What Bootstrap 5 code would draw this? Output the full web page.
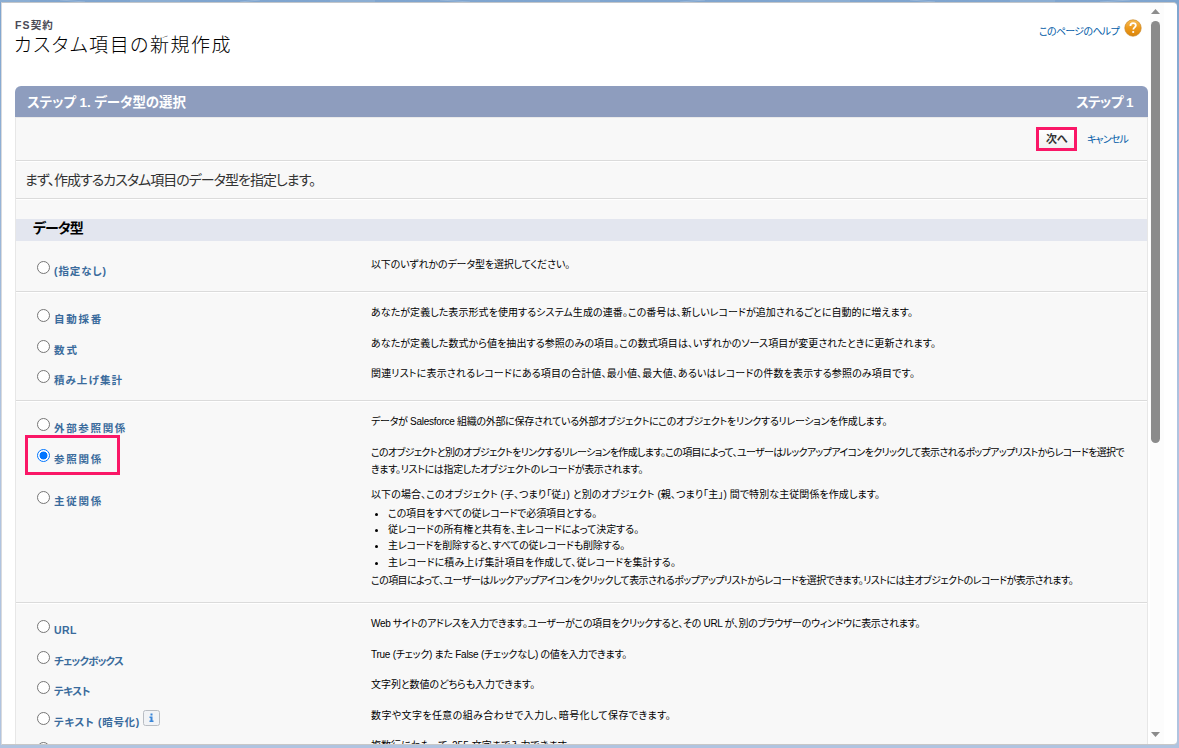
<!DOCTYPE html>
<html lang="ja">
<head>
<meta charset="utf-8">
<title>カスタム項目の新規作成</title>
<link rel="stylesheet" href="https://cdn.jsdelivr.net/npm/bootstrap@5.3.0/dist/css/bootstrap.min.css">
<style>
html, body { height: 748px; overflow: hidden; }
body { font: 11px/17px "Liberation Sans", "Noto Sans CJK JP", sans-serif; color: #000; background: linear-gradient(#7fa5cf, #b0c4e0 420px); }
.strip { height: 2px; overflow: hidden; }
.strip svg { display: block; }
.frame { height: 743px; margin: 0 2px 0 1px; border: 1px solid #d9dadd; border-top-color: #c3c6ca; border-bottom: 1px solid #c8c8c8; border-right: 0; border-radius: 0 4px 4px 0; background: #fff; overflow: hidden; }
.content-col { width: 1133px; margin-left: 13px; }
[data-w] { display: inline-block; white-space: nowrap; font-feature-settings: "palt"; }
.masthead { height: 83px; }
.object-name { font-size: 10.5px; line-height: 14px; color: #4a4a56; margin-top: 15px; }
.page-title { font-family: "Noto Sans CJK JP", sans-serif; font-size: 19px; line-height: 24px; font-weight: 300; margin: 0 0 0 -1px; }
a { color: #015ba7; text-decoration: none; }
.help { padding: 16px 6px 0 0; font-size: 10px; }
.wizard-head { height: 31px; padding: 1px 15px 0 12px; background: #8e9dbe; border-radius: 6px 6px 0 0; color: #fff; font-size: 13.5px; }
.wizard-body { height: 700px; background: #f8f8f8; border: solid #e7e7e7; border-width: 0 1px; }
.ruled { border-bottom: 1px solid #dbdbdb; box-shadow: 0 1px #fff; }
.actions { height: 44px; padding-right: 19px; border-top: 1px solid #eaeaea; font-size: 10px; }
.intro { height: 38px; padding: 2px 0 0 9px; font-size: 14px; color: #333; }
.band { height: 22px; margin-top: 20px; padding-left: 17px; background: #e3e6ef; font-size: 14px; line-height: 18px; }
.btn-next { width: 41px; height: 24px; border: 3px solid #fa1767; border-radius: 0; padding: 0; font-size: 11px; line-height: 16px; color: #333; background: linear-gradient(#fff, #f1f1f1); margin-right: 10px; }
.type-group { padding: 12px 0 0 21px; }
.type-group.first { padding-top: 15px; }
.type-row { display: flex; position: relative; height: 30.5px; }
.type-row.tall { height: 42px; }
.type-row input { appearance: none; width: 13px; height: 13px; margin: 5px 4px 0 0; border: 1px solid #767676; border-radius: 50%; background: #fff; flex: none; }
.type-row input:checked { border-color: #0075ff; background: radial-gradient(circle, #0075ff 3.6px, #fff 4.3px); }
.type-label { width: 317px; height: 24px; flex: none; padding-top: 7px; color: #3a6b9c; font-weight: 700; font-size: 10.5px; }
.type-desc { flex: none; width: 772px; font-size: 10px; }
.type-desc ul { margin: 2px 0 2px; padding-left: 17px; line-height: 16.4px; }
.type-desc li { height: 16.4px; }
.type-desc li::marker { font-size: 11px; }
.highlight { position: absolute; left: -12px; top: -9px; width: 95px; height: 40px; border: 3px solid #fa1767; }
.info-tip { display: inline-block; vertical-align: top; margin: -4px 0 0 3px; }
.scroller { width: 14px; margin-left: 2px; background: #fcfcfc; padding: 6px 0 7px 1px; }
.thumb { width: 9px; height: 422px; border-radius: 5px; background: #8b8b8b; margin-top: 7px; }
.scroller svg { display: block; flex: none; }
</style>
</head>
<body>
<div class="strip"><svg width="1179" height="2"><path d="M0 1h30M60 0l25 2M130 1h50M240 2l20-2M330 1h45M440 0l30 2M560 1h40M680 2l25-2M790 1h60M910 0l25 2M1010 1h45M1100 2l30-2" stroke="#a9c3df" opacity=".6"/></svg></div>
<div class="frame d-flex">
  <main class="content-col">
    <header class="masthead d-flex justify-content-between">
      <div>
        <div class="object-name fw-bold"><span data-w="39">FS契約</span></div>
        <h1 class="page-title"><span data-w="218">カスタム項目の新規作成</span></h1>
      </div>
      <div class="help d-flex align-items-start">
        <a href="#" class="mt-1" style="margin-right:5px"><span data-w="80">このページのヘルプ</span></a>
        <svg width="18" height="18" viewBox="0 0 18 18"><defs><linearGradient id="amber" x2="0" y2="1"><stop stop-color="#f6bd57"/><stop offset=".5" stop-color="#ee9a1c"/><stop offset="1" stop-color="#d98409"/></linearGradient></defs><circle cx="9" cy="9" r="8.2" fill="url(#amber)" stroke="#c98627" stroke-width=".7"/><path d="M6.400 6.900c0-1.800 1.100-2.700 2.700-2.700s2.700.9 2.700 2.300c0 1.800-2.500 1.900-2.500 4" fill="none" stroke="#fff" stroke-width="1.800"/><circle cx="9.200" cy="13" r="1.100" fill="#fff"/></svg>
      </div>
    </header>
    <div class="wizard-head d-flex justify-content-between align-items-center fw-bold">
      <span data-w="159">ステップ 1. データ型の選択</span><span data-w="57">ステップ 1</span>
    </div>
    <section class="wizard-body">
      <div class="actions ruled d-flex justify-content-end align-items-center">
        <button class="btn btn-next fw-bold"><span data-w="21">次へ</span></button>
        <a href="#"><span data-w="41">キャンセル</span></a>
      </div>
      <div class="intro ruled d-flex align-items-center"><span data-w="290">まず、作成するカスタム項目のデータ型を指定します。</span></div>
      <div class="band fw-bold"><span data-w="50">データ型</span></div>

      <div class="type-group first ruled" style="height:51px">
        <label class="type-row"><input type="radio" name="t"><span class="type-label"><span data-w="53">(指定なし)</span></span><span class="type-desc"><span data-w="199">以下のいずれかのデータ型を選択してください。</span></span></label>
      </div>
      <div class="type-group ruled" style="height:109px">
        <label class="type-row"><input type="radio" name="t"><span class="type-label"><span data-w="49">自動採番</span></span><span class="type-desc"><span data-w="542">あなたが定義した表示形式を使用するシステム生成の連番。この番号は、新しいレコードが追加されるごとに自動的に増えます。</span></span></label>
        <label class="type-row"><input type="radio" name="t"><span class="type-label"><span data-w="25">数式</span></span><span class="type-desc"><span data-w="565">あなたが定義した数式から値を抽出する参照のみの項目。この数式項目は、いずれかのソース項目が変更されたときに更新されます。</span></span></label>
        <label class="type-row"><input type="radio" name="t"><span class="type-label"><span data-w="69">積み上げ集計</span></span><span class="type-desc"><span data-w="544">関連リストに表示されるレコードにある項目の合計値、最小値、最大値、あるいはレコードの件数を表示する参照のみ項目です。</span></span></label>
      </div>
      <div class="type-group ruled" style="height:202px">
        <label class="type-row"><input type="radio" name="t"><span class="type-label"><span data-w="73">外部参照関係</span></span><span class="type-desc"><span data-w="516">データが Salesforce 組織の外部に保存されている外部オブジェクトにこのオブジェクトをリンクするリレーションを作成します。</span></span></label>
        <label class="type-row tall"><span class="highlight"></span><input type="radio" name="t" checked><span class="type-label"><span data-w="49">参照関係</span></span><span class="type-desc"><span data-w="753">このオブジェクトと別のオブジェクトをリンクするリレーションを作成します。この項目によって、ユーザーはルックアップアイコンをクリックして表示されるポップアップリストからレコードを選択で</span><br><span data-w="272">きます。リストには指定したオブジェクトのレコードが表示されます。</span></span></label>
        <div class="type-row"><input type="radio" name="t"><span class="type-label"><span data-w="49">主従関係</span></span>
          <div class="type-desc"><span data-w="509">以下の場合、このオブジェクト (子、つまり「従」) と別のオブジェクト (親、つまり「主」) 間で特別な主従関係を作成します。</span>
            <ul>
              <li><span data-w="209">この項目をすべての従レコードで必須項目とする。</span></li>
              <li><span data-w="251">従レコードの所有権と共有を、主レコードによって決定する。</span></li>
              <li><span data-w="237">主レコードを削除すると、すべての従レコードも削除する。</span></li>
              <li><span data-w="288">主レコードに積み上げ集計項目を作成して、従レコードを集計する。</span></li>
            </ul>
            <span data-w="702">この項目によって、ユーザーはルックアップアイコンをクリックして表示されるポップアップリストからレコードを選択できます。リストには主オブジェクトのレコードが表示されます。</span>
          </div>
        </div>
      </div>
      <div class="type-group">
        <label class="type-row"><input type="radio" name="t"><span class="type-label"><span data-w="23">URL</span></span><span class="type-desc"><span data-w="549">Web サイトのアドレスを入力できます。ユーザーがこの項目をクリックすると、その URL が、別のブラウザーのウィンドウに表示されます。</span></span></label>
        <label class="type-row"><input type="radio" name="t"><span class="type-label"><span data-w="69">チェックボックス</span></span><span class="type-desc"><span data-w="256">True (チェック) また False (チェックなし) の値を入力できます。</span></span></label>
        <label class="type-row"><input type="radio" name="t"><span class="type-label"><span data-w="36">テキスト</span></span><span class="type-desc"><span data-w="164">文字列と数値のどちらも入力できます。</span></span></label>
        <label class="type-row"><input type="radio" name="t"><span class="type-label"><span data-w="86">テキスト (暗号化)</span><svg class="info-tip" width="17" height="16" viewBox="0 0 17 16"><rect x=".5" y=".5" width="16" height="15" rx="2" fill="#f1f3f6" stroke="#b9bdc3"/><path d="M7.500 3.500h2v2h-2zM6.500 6.500h3v4h1v1.500h-4v-1.500h1v-2.500h-1z" fill="#3a86d8"/></svg></span><span class="type-desc"><span data-w="300">数字や文字を任意の組み合わせで入力し、暗号化して保存できます。</span></span></label>
        <label class="type-row"><input type="radio" name="t"><span class="type-label"></span><span class="type-desc"><span data-w="200">複数行にわたって、255 文字まで入力できます。</span></span></label>
      </div>
    </section>
  </main>
  <div class="scroller d-flex flex-column">
    <svg width="9" height="5"><path d="M0 5L4.500 0 9 5z" fill="#8b8b8b"/></svg>
    <div class="thumb"></div>
    <svg class="mt-auto" width="9" height="5"><path d="M0 0L4.500 5 9 0z" fill="#8b8b8b"/></svg>
  </div>
</div>
<script src="https://cdn.jsdelivr.net/npm/bootstrap@5.3.0/dist/js/bootstrap.bundle.min.js"></script>
<script>
document.querySelectorAll('[data-w]').forEach(el => {
  const n = [...el.textContent].length;
  const gap = (el.dataset.w - el.getBoundingClientRect().width) / n;
  el.style.letterSpacing = gap.toFixed(3) + 'px';
});
</script>
</body>
</html>
